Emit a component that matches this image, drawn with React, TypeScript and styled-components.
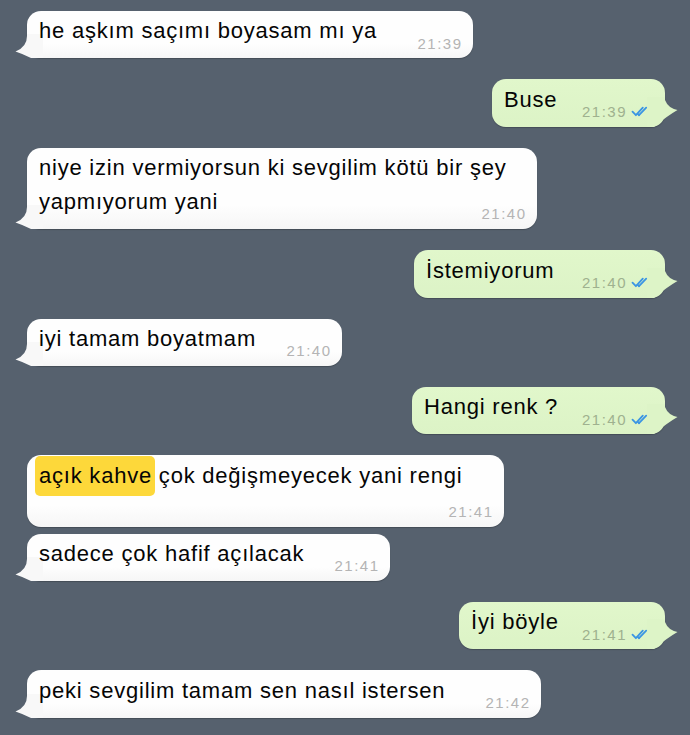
import React from "react";
import styled, { createGlobalStyle } from "styled-components";

const Global = createGlobalStyle`
  html, body {
    margin: 0;
    padding: 0;
    background: #56616e;
  }
  body {
    font-family: "Liberation Sans", Arial, sans-serif;
    -webkit-font-smoothing: antialiased;
  }
`;

const Chat = styled.div`
  display: flex;
  flex-direction: column;
  box-sizing: border-box;
  min-height: 735px;
  padding: 11px 25px 20px 27px;
`;

const Bubble = styled.div<{ $out?: boolean; $w: number; $gap: number }>`
  position: relative;
  z-index: 0;
  display: flow-root;
  box-sizing: border-box;
  width: ${(p) => p.$w}px;
  align-self: ${(p) => (p.$out ? "flex-end" : "flex-start")};
  margin-top: ${(p) => p.$gap}px;
  padding: 3.4px ${(p) => (p.$out ? 15 : 10.5)}px 10px 12px;
  background: ${(p) =>
    p.$out
      ? "linear-gradient(#e1f7cb, #dcf3c6)"
      : "linear-gradient(#fefefe 70%, #f6f6f6)"};
  border-radius: 14px;
  box-shadow: 0 1px 1px rgba(0, 0, 0, 0.22);
  color: #050505;
  font-size: 22px;
  line-height: 34px;
  letter-spacing: 0.78px;
`;

const Line = styled.span``;

const Mark = styled.mark`
  background: #fdd83a;
  color: inherit;
  border-radius: 5px;
  padding: 7px 3px 8px 4px;
  margin-left: -4px;
  margin-right: -3px;
`;

const Meta = styled.span<{ $out?: boolean; $stacked?: boolean }>`
  float: right;
  display: flex;
  align-items: center;
  gap: 4px;
  height: 15px;
  margin-top: ${(p) => (p.$stacked ? 11.7 : 21.3)}px;
  margin-bottom: -2.3px;
  margin-left: 20px;
  font-size: 15px;
  line-height: 15px;
  letter-spacing: 1.5px;
  color: ${(p) => (p.$out ? "#9fb18f" : "#b4b4b4")};
`;

const Time = styled.span``;

const Ticks = styled.svg`
  width: 19px;
  height: 11px;
  flex: none;
`;

const TailIn = styled.svg`
  position: absolute;
  z-index: -1;
  left: -14px;
  bottom: 0;
  width: 30px;
  height: 24px;
`;

const TailOut = styled.svg`
  position: absolute;
  z-index: -1;
  right: -14px;
  bottom: 0;
  width: 32px;
  height: 30px;
`;

type Msg = {
  out?: boolean;
  w: number;
  gap: number;
  time: string;
  tail?: boolean;
  stacked?: boolean;
  lines: React.ReactNode[];
};

const messages: Msg[] = [
  { w: 446, gap: 0, time: "21:39", tail: true, lines: ["he aşkım saçımı boyasam mı ya"] },
  { out: true, w: 173, gap: 21, time: "21:39", tail: true, lines: ["Buse"] },
  {
    w: 510,
    gap: 21,
    time: "21:40",
    tail: true,
    lines: ["niye izin vermiyorsun ki sevgilim kötü bir şey", "yapmıyorum yani"],
  },
  { out: true, w: 251, gap: 21, time: "21:40", tail: true, lines: ["İstemiyorum"] },
  { w: 315, gap: 21, time: "21:40", tail: true, lines: ["iyi tamam boyatmam"] },
  { out: true, w: 253, gap: 21, time: "21:40", tail: true, lines: ["Hangi renk ?"] },
  {
    w: 477,
    gap: 21,
    time: "21:41",
    stacked: true,
    lines: [
      <>
        <Mark>açık kahve</Mark> çok değişmeyecek yani rengi
      </>,
    ],
  },
  { w: 363, gap: 6.5, time: "21:41", tail: true, lines: ["sadece çok hafif açılacak"] },
  { out: true, w: 206, gap: 21, time: "21:41", tail: true, lines: ["İyi böyle"] },
  { w: 514, gap: 21, time: "21:42", tail: true, lines: ["peki sevgilim tamam sen nasıl istersen"] },
];

function DoubleCheck() {
  return (
    <Ticks
      viewBox="0 0 19 11"
      fill="none"
      stroke="#3b95e3"
      strokeWidth={1.8}
      strokeLinecap="round"
      strokeLinejoin="round"
    >
      <path d="M1.5 5.6 L4.9 9.2 L11.8 1.6" />
      <path d="M8 9.2 L15.2 1.6" />
      <path d="M6.7 7.9 L8 9.2" />
    </Ticks>
  );
}

export default function App() {
  return (
    <>
      <Global />
      <Chat>
        {messages.map((m, i) => (
          <Bubble key={i} $out={m.out} $w={m.w} $gap={m.gap}>
            {m.tail && !m.out && (
              <TailIn viewBox="0 0 30 24">
                <path d="M14 0 L14 2 Q14 13 2.5 17.5 Q10 20 18 24 L30 24 L30 0 Z" fill="#f8f8f8" />
              </TailIn>
            )}
            {m.tail && m.out && (
              <TailOut viewBox="0 0 32 30">
                <path d="M18 0 L18 3 Q21 11 30.5 13 Q20 19 7 30 L0 30 L0 0 Z" fill="#ddf4c7" />
              </TailOut>
            )}
            {m.lines.map((l, j) => (
              <React.Fragment key={j}>
                {j > 0 && <br />}
                <Line>{l}</Line>
              </React.Fragment>
            ))}
            <Meta $out={m.out} $stacked={m.stacked}>
              <Time>{m.time}</Time>
              {m.out && <DoubleCheck />}
            </Meta>
          </Bubble>
        ))}
      </Chat>
    </>
  );
}
